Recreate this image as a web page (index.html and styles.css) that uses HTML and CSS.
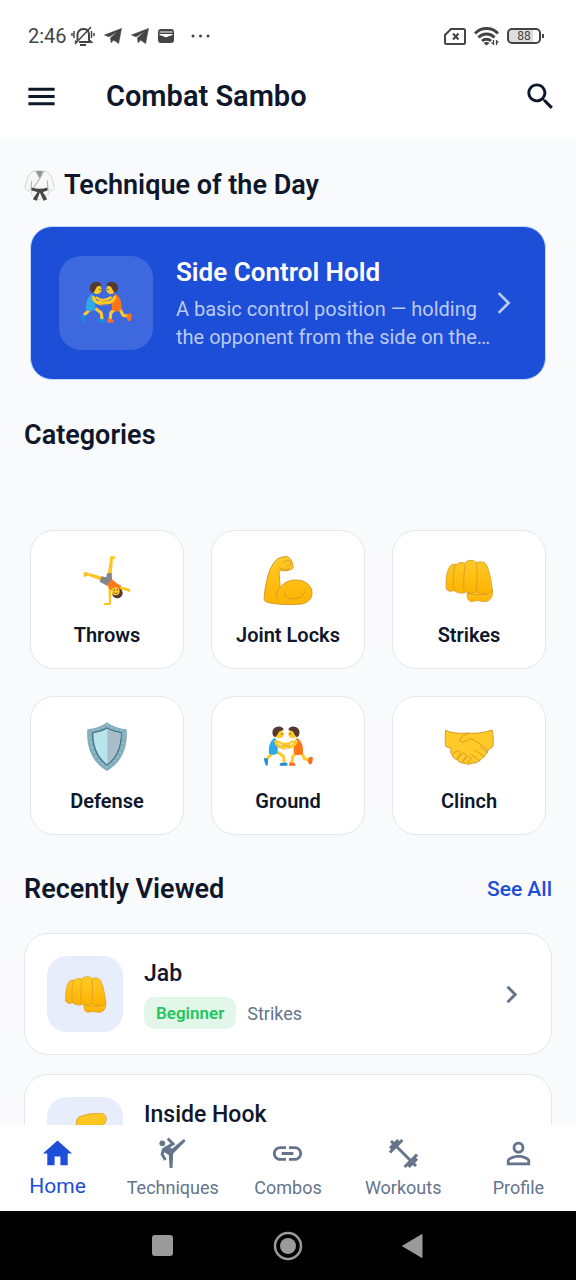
FILE: index.html
```html
<!DOCTYPE html>
<html lang="en">
<head>
    <meta charset="UTF-8">
    <meta name="viewport" content="width=device-width, initial-scale=1.0">
    <title>Combat Sambo</title>
    <link rel="stylesheet" href="styles.css">
</head>
<body>
    <!-- Shared drawings -->
    <svg class="sprite" aria-hidden="true">
        <defs>
            <linearGradient id="skin" x1="0" y1="0" x2="0" y2="1">
                <stop offset="0" stop-color="#ffca28"/>
                <stop offset="1" stop-color="#ffb300"/>
            </linearGradient>
        </defs>
        <symbol id="telegram" viewBox="0 0 18 16">
            <path d="M17.5.5 14.6 15.5 9.6 12 7.2 14.7 6.5 9.8 14 3.2 5 8.8.5 7z" fill="#444" stroke="#444" stroke-width=".6" stroke-linejoin="round"/>
        </symbol>
        <symbol id="chevron" viewBox="0 0 24 24">
            <path d="M10 6L8.59 7.41 13.17 12l-4.58 4.59L10 18l6-6z" fill="currentColor"/>
        </symbol>
        <symbol id="fist" viewBox="189 106 156 156">
            <g fill="url(#skin)" stroke="#d59a26" stroke-width="2.5" stroke-linejoin="round" stroke-linecap="round">
                <path d="M262 216c-2 14 1 27 10 29 8 2 16-3 24-2 10 2 20 5 29 0 11-7 14-19 12-35l-10-6z"/>
                <path d="M199 205c-3-18 1-50 10-64 5-8 15-8 21-7 7-7 19-6 24-3 8-11 26-12 35-2 9-4 23-4 29 5 10 18 18 55 18 77 0 12-7 10-17 10-12 1-24 0-30-7-7 9-21 8-28 1-9 9-31 6-39-3-12 6-22 2-23-7z"/>
                <path d="M225 138c-6 20-7 50-3 73M255 134c-3 22-5 48-3 77M290 131c2 24 2 55-1 81" fill="none"/>
                <path d="M263 221c14 5 36 5 58 3" fill="none"/>
            </g>
        </symbol>
        <symbol id="wrestlers" viewBox="186 94 156 156">
            <path d="M222 186l-22 22M233 188l17 12 3 20M292 188l-14 12-2 18M302 186l12 22 18 2" fill="none" stroke="#ffca28" stroke-width="9" stroke-linejoin="round"/>
            <path d="M224 145c-13 7-20 28-17 48 9 4 19 3 26-2l1-35z" fill="#2fa9e8"/>
            <path d="M291 145c13 7 21 28 17 48-9 5-19 3-27-1l0-34z" fill="#ff7618"/>
            <path d="M192 205l12 2-1 20-5 1c-4-8-6-17-6-23zM243 219h19v9h-23c0-4 1-7 4-9z" fill="#1e88e5"/>
            <path d="M328 202h10c1 8-1 16-4 22l-7 0-4-10zM269 217l12 2c4 2 7 5 6 9h-20z" fill="#ff6d1f"/>
            <circle cx="238" cy="133" r="13" fill="#ffca28"/>
            <circle cx="278" cy="133" r="13" fill="#ffca28"/>
            <path d="M220 139c-7-15 1-28 14-28 9-1 16 3 17 10-8 2-14 3-15 7l-5 9-5 6zM296 139c7-15-1-28-14-28-9-1-16 3-17 10 8 2 14 3 15 7l5 9 5 6z" fill="#543930"/>
            <path d="M227 156c4 11 10 15 18 17l26-4M289 156c-5 10-9 14-17 15l-26-3" fill="none" stroke="#ffca28" stroke-width="9" stroke-linecap="round" stroke-linejoin="round"/>
            <path d="M234 155c8 6 15 8 22 8s14-2 24-8" fill="none" stroke="#ffca28" stroke-width="7"/>
            <path d="M247 165c8 3 16 3 24 0M246 177c10 3 17 1 24-2" fill="none" stroke="#dda032" stroke-width="2"/>
            <circle cx="246" cy="133" r="2" fill="#543930"/>
            <circle cx="270" cy="133" r="2" fill="#543930"/>
        </symbol>
        <symbol id="cartwheel" viewBox="183 106 156 156">
            <path d="M263 172c0-19 6-38 7-59h9c-1 20-3 40-5 58zM248 185l-44-17 3-9 47 15zM288 196l40 11-3 8-41-9zM265 206h9l-1 48h-6z" fill="#ffc526"/>
            <path d="M270 110h15v6l-12 7zM191 158l6-2 9 5-3 8-12 3zM252 250h20v6h-20zM326 205l5 6-3 8-6-6z" fill="#ffc526"/>
            <path d="M261 161l14-1c1 8 0 15 2 22l-16 16-22-12 5-16 15 3z" fill="#858585"/>
            <path d="M276 179l14 12 14 7-18 18-18-8-7-12z" fill="#ff7a1a"/>
            <circle cx="292" cy="220" r="16" fill="#543930"/>
            <circle cx="287" cy="215" r="12" fill="#ffca28"/>
            <path d="M281 218c4 6 10 5 12 0" fill="none" stroke="#8a4b24" stroke-width="3"/>
            <circle cx="283" cy="211" r="2" fill="#543930"/>
            <circle cx="292" cy="210" r="2" fill="#543930"/>
        </symbol>
        <symbol id="biceps" viewBox="186 106 156 156">
            <path d="M237 156c1 15 3 30 3 48 10-12 24-23 46-23 29-1 50 17 50 38 0 25-20 34-43 35-31 2-68 0-91-6-9-3-11-8-9-19 4-42 13-83 33-105 9-10 22-14 35-13 9 2 16 13 18 27 2 9-5 13-12 13-9 5-21 2-24 0z" fill="url(#skin)" stroke="#d59a26" stroke-width="3" stroke-linejoin="round"/>
            <path d="M240 204c-8 8-12 17-10 30M253 219c2 16 23 24 44 15 9-4 15-10 18-17M248 130c6-8 18-9 23-3 4 7-2 13-9 12M238 144c7 6 20 7 29 3" fill="none" stroke="#d59a26" stroke-width="3" stroke-linecap="round"/>
        </symbol>
        <symbol id="shield" viewBox="183 94 156 156">
            <path d="M261 98c16 12 36 19 59 21 4 50-12 98-59 125-47-27-63-75-59-125 23-2 43-9 59-21z" fill="#82aebe"/>
            <path d="M261 106c15 10 32 15 51 17 2 43-11 84-51 109-40-25-53-66-51-109 19-2 36-7 51-17z" fill="none" stroke="#b5d0d9" stroke-width="4" stroke-dasharray="3 12"/>
            <path d="M261 115c13 8 28 12 43 14 0 39-11 73-43 97-32-24-43-58-43-97 15-2 30-6 43-14z" fill="#b9e4ea" stroke="#487684" stroke-width="4"/>
            <path d="M262 118c13 7 26 11 40 13-1 36-11 68-40 91z" fill="#a9bdca"/>
        </symbol>
        <symbol id="handshake" viewBox="729 94 156 156">
            <path d="M737 122c20 9 44 10 68 8 24 3 50-2 71-9 4 13 4 35 3 49l-15 12c-7 14-15 24-28 32-5 6-14 7-19 6-8 5-18 4-21 1-10 1-21-4-24-11-10-2-16-9-15-15-8-6-6-14-3-18l-17-7c-2-15-2-33 0-48z" fill="#ffca28" stroke="#d59a26" stroke-width="3" stroke-linejoin="round"/>
            <path d="M806 131c-14 3-24 11-28 22 8 8 21 2 29-5 9 0 14 2 22 8 16 10 25 19 34 26M756 195l13-10c7-4 14 1 11 8l-9 15M772 208l15-15c7-5 14 1 11 8l-10 13M788 216l14-14c7-4 12 2 10 8l-9 10M813 194l27 21M826 182l28 20M842 171l21 18" fill="none" stroke="#d59a26" stroke-width="3" stroke-linecap="round"/>
        </symbol>
        <symbol id="leg" viewBox="0 0 135 135">
            <path d="M48 12C64 5 84 1 108 0c19-1 27 16 18 30-4 7-20 9-36 16-10 8-13 24-17 43l-2 21c2 14-6 22-18 22H18c-7-3-4-12 4-13l20-9c4-24-4-49-2-78 0-10 2-16 8-20z" fill="url(#skin)" stroke="#d59a26" stroke-width="2.5"/>
        </symbol>
    </svg>

    <div class="phone">
        <!-- Status bar -->
        <div class="status-bar">
            <div class="status-left">
                <span class="time">2:46</span>
                <svg class="bell" viewBox="0 0 24 20" fill="none" stroke="#444" stroke-width="2">
                    <path d="M6.5 14V9.500a5.500 6 0 0 1 5.500-6.500h1.500a5.500 6 0 0 1 4.500 6V14l2 2H8M6 16l-2-1M9 19h6"/>
                    <path d="M20 1 4 18M3 5v7M1 7v3M20.500 5v7M23 7v3" stroke-width="1.500"/>
                </svg>
                <svg class="plane" viewBox="0 0 18 16"><use href="#telegram"/></svg>
                <svg class="plane" viewBox="0 0 18 16"><use href="#telegram"/></svg>
                <svg class="wallet" viewBox="0 0 16 14">
                    <rect width="16" height="14" rx="3" fill="#444"/>
                    <path d="M1.500 3h13" stroke="#fff"/>
                    <path d="M1.500 5h13v1L10 7.500q-2 1.500-4 0L1.500 6z" fill="#fff"/>
                </svg>
                <svg class="dots" viewBox="0 0 19 4" fill="#444">
                    <circle cx="2" cy="2" r="1.500"/><circle cx="9.500" cy="2" r="1.500"/><circle cx="17" cy="2" r="1.500"/>
                </svg>
            </div>
            <div class="status-right">
                <svg class="sim" viewBox="0 0 22 17" fill="none" stroke="#444" stroke-width="2">
                    <path d="M7 1h12.500a1.500 1.500 0 0 1 1.500 1.500v12a1.500 1.500 0 0 1-1.500 1.500H2.500A1.500 1.500 0 0 1 1 14.500V7z"/>
                    <path d="m9 5.500 5.500 6M14.500 5.500 9 11.500"/>
                </svg>
                <svg class="wifi" viewBox="0 0 25 19" fill="none" stroke="#444" stroke-width="3">
                    <path d="M1 6.500a16 16 0 0 1 23 0M4.500 10.500a11 11 0 0 1 16 0M8 14a6.500 6.500 0 0 1 9 0"/>
                    <path d="m9.500 16 3 2.500 3-2.500q-3-2-6 0z" fill="#444" stroke="none"/>
                    <path d="M19.500 13v5M22.500 13v5M17.500 16h2M22.500 15h2" stroke-width="1.300"/>
                </svg>
                <span class="battery">88</span>
            </div>
        </div>

        <!-- App bar -->
        <header class="app-bar">
            <button class="icon-button" aria-label="Menu">
                <svg class="icon" viewBox="0 0 24 24"><path d="M3 18h18v-2H3v2zm0-5h18v-2H3v2zm0-7v2h18V6H3z"/></svg>
            </button>
            <h1>Combat Sambo</h1>
            <button class="icon-button" aria-label="Search">
                <svg class="icon" viewBox="0 0 24 24"><path d="M15.5 14h-.79l-.28-.27C15.41 12.59 16 11.11 16 9.500 16 5.910 13.090 3 9.500 3S3 5.910 3 9.500 5.910 16 9.500 16c1.610 0 3.090-.59 4.230-1.570l.27.28v.79l5 4.990L20.490 19l-4.990-5zm-6 0C7.010 14 5 11.990 5 9.500S7.010 5 9.500 5 14 7.010 14 9.500 11.990 14 9.500 14z"/></svg>
            </button>
        </header>

        <main>
            <h2 class="with-icon">
                <svg class="gi" viewBox="44 45 92 92" aria-hidden="true">
                    <path d="M75 48c-12 5-19 12-22 25L46 98l11 10 10-9-2 18 22 17 32-18-4-17 10 9 10-10-7-26c-3-12-10-19-23-24z" fill="#f7f7f7" stroke="#c9cccf" stroke-width="2.500"/>
                    <path d="M80 48h20l-9 22z" fill="#8f9396"/>
                    <path d="M79 49l12 21 12-21M91 70 72 98M65 98l2-22M115 98l-2-22" fill="none" stroke="#aeb2b5" stroke-width="3"/>
                    <path d="M66 97c17 5 33 5 48 0v9l-14 4 13 22-11 4-11-24-9 24-12-4 14-22-18-4z" fill="#454545"/>
                </svg>
                Technique of the Day
            </h2>

            <a class="hero" href="#technique">
                <span class="hero-icon"><svg viewBox="0 0 54 54"><use href="#wrestlers"/></svg></span>
                <span class="hero-text">
                    <strong>Side Control Hold</strong>
                    <span class="hero-desc">A basic control position — holding<br>the opponent from the side on the…</span>
                </span>
                <svg class="hero-arrow" viewBox="0 0 24 24"><path d="M6.230 20.230 8 22l10-10L8 2 6.230 3.770 14.460 12z"/></svg>
            </a>

            <h2 class="categories-title">Categories</h2>
            <div class="categories">
                <a class="category" href="#throws"><svg viewBox="0 0 52 52"><use href="#cartwheel"/></svg>Throws</a>
                <a class="category" href="#joint-locks"><svg viewBox="0 0 52 52"><use href="#biceps"/></svg>Joint Locks</a>
                <a class="category" href="#strikes"><svg viewBox="0 0 52 52"><use href="#fist"/></svg>Strikes</a>
                <a class="category" href="#defense"><svg viewBox="0 0 52 52"><use href="#shield"/></svg>Defense</a>
                <a class="category" href="#ground"><svg viewBox="0 0 52 52"><use href="#wrestlers"/></svg>Ground</a>
                <a class="category" href="#clinch"><svg viewBox="0 0 52 52"><use href="#handshake"/></svg>Clinch</a>
            </div>

            <div class="section-header">
                <h2>Recently Viewed</h2>
                <a href="#all">See All</a>
            </div>
            <div class="recent">
                <a class="recent-item" href="#jab">
                    <span class="recent-icon"><svg viewBox="0 0 45 45"><use href="#fist"/></svg></span>
                    <span class="recent-text">
                        <strong>Jab</strong>
                        <span class="meta"><span class="badge">Beginner</span>Strikes</span>
                    </span>
                    <svg class="recent-arrow" viewBox="0 0 24 24"><use href="#chevron"/></svg>
                </a>
                <a class="recent-item" href="#inside-hook">
                    <span class="recent-icon"><svg viewBox="0 0 45 45"><use href="#leg"/></svg></span>
                    <span class="recent-text">
                        <strong>Inside Hook</strong>
                    </span>
                    <svg class="recent-arrow" viewBox="0 0 24 24"><use href="#chevron"/></svg>
                </a>
            </div>
        </main>

        <!-- Tabs -->
        <nav class="tabs">
            <a class="tab active" href="#home">
                <svg class="icon" viewBox="0 0 24 24"><path d="M10 20v-6h4v6h5v-8h3L12 3 2 12h3v8z"/></svg>
                Home
            </a>
            <a class="tab" href="#techniques">
                <svg class="icon" viewBox="0 0 24 24"><circle cx="5" cy="5" r="2"/><path d="M19.800 2l-8.200 6.700-1.210-1.040 3.600-2.080L9.410 1 8 2.410l2.740 2.740L5 8.460l-1.190 4.290L6.270 17 8 16l-2.030-3.520.35-1.300L9.500 13l.5 9h2l.5-10L21 3.400z"/></svg>
                Techniques
            </a>
            <a class="tab" href="#combos">
                <svg class="icon" viewBox="0 0 24 24"><path d="M3.900 12c0-1.710 1.390-3.100 3.100-3.100h4V7H7c-2.760 0-5 2.240-5 5s2.240 5 5 5h4v-1.900H7c-1.710 0-3.100-1.390-3.100-3.100zM8 13h8v-2H8v2zm9-6h-4v1.900h4c1.710 0 3.100 1.390 3.100 3.100s-1.390 3.100-3.100 3.100h-4V17h4c2.760 0 5-2.240 5-5s-2.240-5-5-5z"/></svg>
                Combos
            </a>
            <a class="tab" href="#workouts">
                <svg class="icon" viewBox="0 0 24 24"><path d="M20.570 14.860L22 13.430 20.570 12 17 15.570 8.430 7 12 3.430 10.570 2 9.140 3.430 7.710 2 5.570 4.140 4.140 2.710 2.710 4.140l1.430 1.430L2 7.710l1.430 1.430L2 10.570 3.430 12 7 8.430 15.570 17 12 20.570 13.430 22l1.430-1.430L16.290 22l2.140-2.140 1.430 1.430 1.430-1.430-1.430-1.430L22 16.290z"/></svg>
                Workouts
            </a>
            <a class="tab" href="#profile">
                <svg class="icon" viewBox="0 0 24 24"><path d="M12 5.900a2.100 2.100 0 1 1 0 4.200 2.100 2.100 0 0 1 0-4.200m0 9c2.970 0 6.100 1.460 6.100 2.100v1.100H5.900V17c0-.64 3.130-2.100 6.100-2.100M12 4C9.790 4 8 5.790 8 8s1.790 4 4 4 4-1.790 4-4-1.790-4-4-4zm0 9c-2.670 0-8 1.340-8 4v3h16v-3c0-2.660-5.330-4-8-4z"/></svg>
                Profile
            </a>
        </nav>

        <!-- System buttons -->
        <div class="system-bar">
            <button aria-label="Recent apps"><svg viewBox="0 0 30 30"><rect x="4" y="4" width="21" height="21" rx="3"/></svg></button>
            <button aria-label="Home screen"><svg viewBox="0 0 30 30"><circle cx="15" cy="15" r="13" fill="none" stroke="#9a9a9a" stroke-width="2.500"/><circle cx="15" cy="15" r="8"/></svg></button>
            <button aria-label="Back"><svg viewBox="0 0 30 30"><path d="M4.500 15 24 3.500v23z" stroke="#9a9a9a" stroke-linejoin="round"/></svg></button>
        </div>
    </div>
</body>
</html>
```
FILE: styles.css
```css
* {
    box-sizing: border-box;
}
body {
    margin: 0;
    font-family: Roboto, "Liberation Sans", sans-serif;
    color: #0f172a;
    background-color: #f8fafc;
}
a {
    color: inherit;
    text-decoration: none;
}
button {
    padding: 0;
    border: none;
    background: none;
    color: inherit;
    cursor: pointer;
}
svg {
    display: block;
    flex-shrink: 0;
}
h1, h2 {
    margin: 0;
}
h2 {
    font-size: 27px;
    line-height: 32px;
    font-weight: 600;
}
.sprite {
    position: absolute;
    width: 0;
    height: 0;
}
.phone {
    display: flex;
    flex-direction: column;
    height: 100vh;
}
.icon {
    width: 35px;
    height: 35px;
    fill: currentColor;
}

/* Status bar */
.status-bar {
    display: flex;
    justify-content: space-between;
    align-items: center;
    padding: 24px 35px 7px 28px;
    background-color: #fff;
    color: #444;
}
.status-left, .status-right {
    display: flex;
    align-items: center;
    height: 24px;
}
.status-left {
    gap: 9px;
}
.status-right {
    gap: 8px;
}
.time {
    font-size: 20px;
    margin-right: -5px;
}
.bell {
    width: 24px;
    height: 20px;
}
.plane {
    width: 18px;
    height: 16px;
}
.wallet {
    width: 16px;
    height: 14px;
}
.dots {
    width: 19px;
    height: 4px;
    margin-left: 8px;
}
.sim {
    width: 22px;
    height: 17px;
}
.wifi {
    width: 25px;
    height: 19px;
}
.battery {
    position: relative;
    width: 34px;
    height: 16px;
    border: 2px solid #444;
    border-radius: 5px;
    background: linear-gradient(to right, #dedede 80%, #fff 80%);
    font-size: 12px;
    line-height: 12px;
    text-align: center;
}
.battery::after {
    content: "";
    position: absolute;
    right: -5px;
    top: 4px;
    width: 2px;
    height: 4px;
    background-color: #444;
}

/* App bar */
.app-bar {
    display: flex;
    align-items: center;
    height: 82px;
    padding: 0 18px 0 24px;
    background-color: #fff;
}
.app-bar h1 {
    flex: 1;
    margin-left: 47px;
    font-size: 29px;
    font-weight: 600;
}

/* Content */
main {
    flex: 1;
    min-height: 0;
    overflow: hidden;
    padding: 32px 24px;
}
.with-icon {
    display: flex;
    align-items: center;
    gap: 9px;
}
.gi {
    width: 31px;
    height: 31px;
}
.hero {
    display: flex;
    align-items: center;
    margin: 25px 6px 0;
    padding: 28px;
    border: 1px solid #c3d8f7;
    border-radius: 22px;
    background-color: #1d4ed8;
    color: #fff;
}
.hero-icon {
    display: flex;
    align-items: center;
    justify-content: center;
    width: 94px;
    height: 94px;
    margin-right: 23px;
    border-radius: 22px;
    background-color: rgba(255, 255, 255, 0.15);
}
.hero-icon svg {
    width: 54px;
    height: 54px;
}
.hero-text {
    flex: 1;
    white-space: nowrap;
}
.hero-text strong {
    display: block;
    margin-bottom: 6px;
    font-size: 26px;
    line-height: 34px;
    font-weight: 600;
}
.hero-desc {
    display: block;
    font-size: 20px;
    line-height: 28px;
    color: #bbcaf3;
}
.hero-arrow {
    width: 26px;
    height: 26px;
    fill: #bbcaf3;
}
.categories-title {
    margin-top: 39px;
}
.categories {
    display: grid;
    grid-template-columns: repeat(3, 1fr);
    gap: 27px;
    margin: 79px 6px 0;
}
.category {
    display: flex;
    flex-direction: column;
    align-items: center;
    gap: 16px;
    padding: 24px 0 21px;
    border: 1px solid #e2e8f0;
    border-radius: 24px;
    background-color: #fff;
    font-size: 20px;
    line-height: 24px;
    font-weight: 600;
}
.category svg {
    width: 52px;
    height: 52px;
}
.section-header {
    display: flex;
    justify-content: space-between;
    align-items: center;
    margin-top: 38px;
}
.section-header a {
    color: #1d4ed8;
    font-size: 21px;
    font-weight: 500;
}
.recent {
    display: flex;
    flex-direction: column;
    gap: 19px;
    margin-top: 28px;
}
.recent-item {
    display: flex;
    padding: 22px;
    border: 1px solid #e2e8f0;
    border-radius: 24px;
    background-color: #fff;
}
.recent-icon {
    display: flex;
    align-items: center;
    justify-content: center;
    width: 76px;
    height: 76px;
    margin-right: 21px;
    border-radius: 20px;
    background-color: #e8edfb;
}
.recent-icon svg {
    width: 45px;
    height: 45px;
}
.recent-text {
    flex: 1;
    padding-top: 2px;
}
.recent-text strong {
    display: block;
    font-size: 23px;
    line-height: 32px;
    font-weight: 500;
}
.meta {
    display: flex;
    align-items: center;
    gap: 11px;
    margin-top: 7px;
    font-size: 18px;
    color: #64748b;
}
.badge {
    padding: 0 12px;
    border-radius: 10px;
    background-color: #e2f7ea;
    color: #22c55e;
    font-size: 17px;
    line-height: 32px;
    font-weight: 600;
}
.recent-arrow {
    align-self: center;
    width: 35px;
    height: 35px;
    color: #64748b;
}

/* Tabs */
.tabs {
    display: grid;
    grid-template-columns: repeat(5, 1fr);
    height: 86px;
    background-color: #fff;
}
.tab {
    display: flex;
    flex-direction: column;
    align-items: center;
    padding-top: 11px;
    font-size: 18px;
    line-height: 34px;
    color: #64748b;
}
.tab.active {
    color: #1d4ed8;
    font-size: 21px;
    line-height: 30px;
}

/* System buttons */
.system-bar {
    display: grid;
    grid-template-columns: repeat(3, 125px);
    justify-content: center;
    height: 69px;
    background-color: #000;
}
.system-bar button {
    display: flex;
    align-items: center;
    justify-content: center;
}
.system-bar svg {
    width: 30px;
    height: 30px;
    fill: #9a9a9a;
}
```
